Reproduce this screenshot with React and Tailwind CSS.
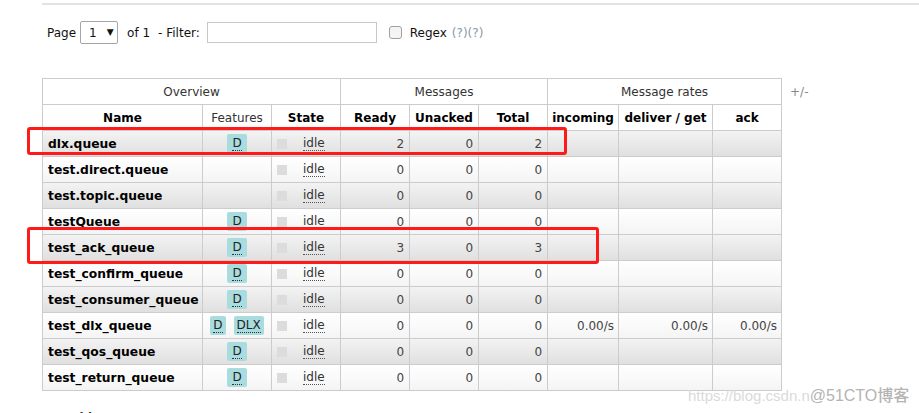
import React from 'react';

const queues = [
  { name: 'dlx.queue', features: ['D'], ready: 2, unacked: 0, total: 2 },
  { name: 'test.direct.queue', features: [], ready: 0, unacked: 0, total: 0 },
  { name: 'test.topic.queue', features: [], ready: 0, unacked: 0, total: 0 },
  { name: 'testQueue', features: ['D'], ready: 0, unacked: 0, total: 0 },
  { name: 'test_ack_queue', features: ['D'], ready: 3, unacked: 0, total: 3 },
  { name: 'test_confirm_queue', features: ['D'], ready: 0, unacked: 0, total: 0 },
  { name: 'test_consumer_queue', features: ['D'], ready: 0, unacked: 0, total: 0 },
  { name: 'test_dlx_queue', features: ['D', 'DLX'], ready: 0, unacked: 0, total: 0, rates: ['0.00/s', '0.00/s', '0.00/s'] },
  { name: 'test_qos_queue', features: ['D'], ready: 0, unacked: 0, total: 0 },
  { name: 'test_return_queue', features: ['D'], ready: 0, unacked: 0, total: 0 },
];

const cell = 'border border-[#cccccc] h-[26px] p-0';

function Badge({ label, tight }) {
  return (
    <span
      className={`inline-flex items-center h-[19px] rounded-[2px] bg-[#a9dcdf] text-[#222] ${tight ? 'px-[3px]' : 'px-[5px]'}`}
    >
      <abbr className="no-underline border-b border-dotted border-[#333] leading-[13px]">{label}</abbr>
    </span>
  );
}

export default function App() {
  return (
    <div
      className="relative w-[919px] h-[413px] overflow-hidden bg-white text-[12px] text-[#222]"
      style={{ fontFamily: '"DejaVu Sans", Verdana, sans-serif' }}
    >
      <div className="mt-[3px] ml-[42px] h-[2px] bg-[#e2e2e2]" />

      {/* paging / filter */}
      <div className="flex items-center ml-[47px] mt-[16px] h-[23px] text-[12px] text-[#111]">
        <span>Page</span>
        <div className="ml-[4px] flex items-center w-[38px] h-[23px] border border-[#a6a6a6] rounded-[2px] bg-white">
          <span className="ml-[8px]">1</span>
          <span className="ml-[10px] text-[9px]">▼</span>
        </div>
        <span className="ml-[9px]">of 1</span>
        <span className="ml-[8px]">- Filter:</span>
        <div className="ml-[7px] w-[170px] h-[21px] border border-[#c8c8c8] bg-white" />
        <div className="ml-[12px] w-[13px] h-[13px] border border-[#a0a0a0] rounded-[3px] bg-[#f4f4f4]" />
        <span className="ml-[8px]">Regex</span>
        <span className="ml-[5px] text-[#8898a8]">(?)(?)</span>
      </div>

      {/* queue table */}
      <div className="flex items-start ml-[42px] mt-[34px]">
        <table className="table-fixed border-collapse w-[739px]">
          <colgroup>
            <col className="w-[160px]" />
            <col className="w-[69px]" />
            <col className="w-[69px]" />
            <col className="w-[69px]" />
            <col className="w-[69px]" />
            <col className="w-[69px]" />
            <col className="w-[71px]" />
            <col className="w-[94px]" />
            <col className="w-[69px]" />
          </colgroup>
          <thead>
            <tr className="bg-white text-[#333]">
              <th colSpan={3} className={`${cell} font-normal text-center`}>Overview</th>
              <th colSpan={3} className={`${cell} font-normal text-center`}>Messages</th>
              <th colSpan={3} className={`${cell} font-normal text-center`}>Message rates</th>
            </tr>
            <tr className="bg-white text-black">
              <th className={`${cell} font-bold`}>Name</th>
              <th className={`${cell} font-normal text-[#333]`}>Features</th>
              <th className={`${cell} font-bold`}>State</th>
              <th className={`${cell} font-bold`}>Ready</th>
              <th className={`${cell} font-bold`}>Unacked</th>
              <th className={`${cell} font-bold`}>Total</th>
              <th className={`${cell} font-bold whitespace-nowrap`}>incoming</th>
              <th className={`${cell} font-bold whitespace-nowrap`}>deliver / get</th>
              <th className={`${cell} font-bold`}>ack</th>
            </tr>
          </thead>
          <tbody>
            {queues.map((q, i) => (
              <tr
                key={q.name}
                className={
                  i % 2 === 0
                    ? 'bg-gradient-to-b from-[#f3f3f3] to-[#dfdfdf]'
                    : 'bg-gradient-to-b from-white to-[#f4f4f4]'
                }
              >
                <td className={`${cell} pl-[5px] pt-[1px] font-bold text-[12.3px] text-black whitespace-nowrap`}>{q.name}</td>
                <td className={cell}>
                  <div className="flex justify-center gap-[8px]">
                    {q.features.map((f) => (
                      <Badge key={f} label={f} tight={q.features.length > 1} />
                    ))}
                  </div>
                </td>
                <td className={cell}>
                  <div className="flex items-center">
                    <span className="ml-[5px] w-[10px] h-[10px] bg-[#dcdcdc]" />
                    <abbr className="ml-[16px] no-underline border-b border-dotted border-[#555] leading-[13px] text-[#333]">
                      idle
                    </abbr>
                  </div>
                </td>
                <td className={`${cell} text-right pr-[5px] text-[#444]`}>{q.ready}</td>
                <td className={`${cell} text-right pr-[5px] text-[#444]`}>{q.unacked}</td>
                <td className={`${cell} text-right pr-[5px] text-[#444]`}>{q.total}</td>
                {[0, 1, 2].map((k) => (
                  <td key={k} className={`${cell} text-right pr-[4px] text-[#444]`}>
                    {q.rates ? q.rates[k] : ''}
                  </td>
                ))}
              </tr>
            ))}
          </tbody>
        </table>
        <span className="ml-[8px] mt-[5px] text-[#888]">+/-</span>
      </div>

      {/* add a new queue */}
      <div className="flex items-center ml-[51px] mt-[18px] text-[12px] font-bold text-[#333]">
        <span className="text-[#aaa] text-[10px]">▶</span>
        <span className="ml-[7px]">Add a new queue</span>
      </div>

      {/* annotation boxes */}
      <div className="absolute left-[27px] top-[127px] w-[540px] h-[28px] border-[3px] border-[#ff1a1a] rounded-[3px]" />
      <div className="absolute left-[27px] top-[227px] w-[572px] h-[37px] border-[3px] border-[#ff1a1a] rounded-[3px]" />

      {/* watermark */}
      <div
        className="absolute left-[688px] top-[384px] flex items-baseline whitespace-nowrap"
        style={{ fontFamily: '"Liberation Sans", "Noto Sans CJK SC", Arial, sans-serif' }}
      >
        <span className="text-[15px] text-[#dadada]">https://blog.csdn.n</span>
        <span className="text-[16px] font-medium text-[#b4b4b4]">@51CTO博客</span>
      </div>
    </div>
  );
}
